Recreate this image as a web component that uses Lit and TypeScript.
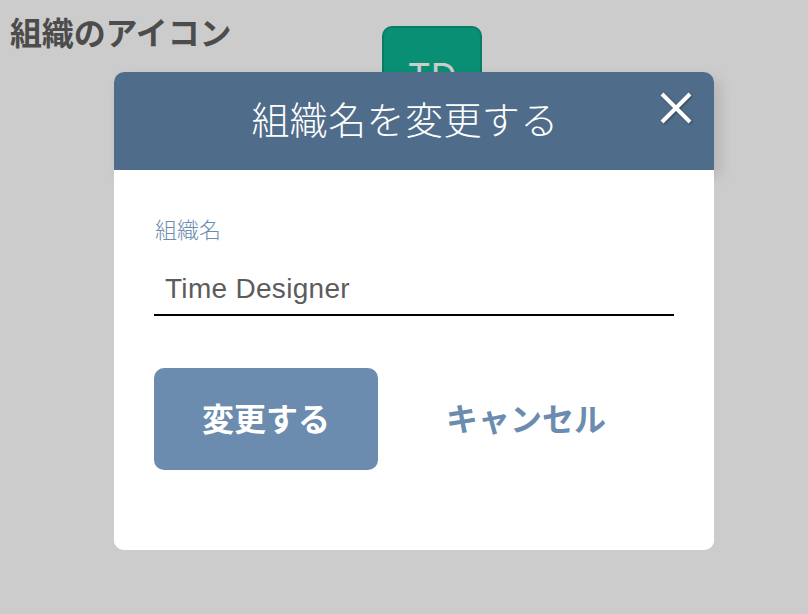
import { LitElement, html, css } from 'lit';
import { customElement, state } from 'lit/decorators.js';

@customElement('app-root')
export class AppRoot extends LitElement {
  static styles = css`
    :host {
      display: block;
      position: relative;
      width: 808px;
      height: 614px;
      overflow: hidden;
      background: #fff;
      font-family: "Noto Sans CJK JP", "Noto Sans", sans-serif;
    }
    .page {
      display: flex;
      align-items: flex-start;
      padding: 26px 0 0 10px;
    }
    .page h2 {
      margin: -13px 0 0;
      width: 372px;
      font-size: 32px;
      line-height: 36px;
      font-weight: 700;
      letter-spacing: -0.15px;
      color: #5f5f5f;
      white-space: nowrap;
    }
    .tile {
      box-sizing: border-box;
      width: 100px;
      height: 100px;
      border-radius: 10px;
      border: 2px solid #0b9c7d;
      background: #0cb592;
      color: #fff;
      font-family: Inter, sans-serif;
      font-size: 36px;
      display: flex;
      justify-content: center;
      align-items: center;
    }
    .backdrop {
      position: absolute;
      inset: 0;
      background: rgba(0, 0, 0, 0.2);
    }
    .modal {
      position: absolute;
      left: 114px;
      top: 72px;
      width: 600px;
      height: 478px;
      background: #fff;
      border-radius: 10px;
    }
    .head {
      position: relative;
      height: 98px;
      background: #4f6d8a;
      border-radius: 10px 10px 0 0;
      box-shadow: 6px 6px 14px rgba(0, 0, 0, 0.12);
      display: flex;
      justify-content: center;
      align-items: center;
      padding-right: 18px;
      box-sizing: border-box;
    }
    .head h1 {
      margin: -8px 0 0;
      font-size: 38px;
      font-weight: 300;
      letter-spacing: 0.4px;
      color: #fff;
    }
    .close {
      position: absolute;
      right: 22px;
      top: 20px;
      width: 32px;
      height: 32px;
      padding: 0;
      border: none;
      background: none;
      filter: drop-shadow(1px 1px 1px rgba(0, 0, 0, 0.35));
    }
    .close svg {
      display: block;
    }
    .body {
      position: relative;
      background: #fff;
      border-radius: 0 0 10px 10px;
      height: 380px;
      box-sizing: border-box;
      padding: 42px 40px 0;
    }
    label {
      display: block;
      font-size: 22px;
      font-weight: 300;
      line-height: 32px;
      color: #6b8cae;
      padding-left: 1px;
    }
    input {
      display: block;
      box-sizing: border-box;
      width: 100%;
      height: 52px;
      padding: 0 11px;
      margin-top: 20px;
      border: none;
      border-bottom: 2px solid #000;
      outline: none;
      background: none;
      font-family: "Liberation Sans", sans-serif;
      font-size: 28px;
      letter-spacing: 0.3px;
      color: #5c5c5c;
    }
    .actions {
      display: flex;
      margin-top: 52px;
    }
    .actions button {
      width: 224px;
      height: 102px;
      border: none;
      border-radius: 10px;
      font-family: inherit;
      font-size: 32px;
      font-weight: 700;
      padding: 0 0 4px;
    }
    .save {
      background: #6b8cae;
      color: #fff;
    }
    .cancel {
      margin-left: 36px;
      background: none;
      color: #6b8cae;
    }
  `;

  @state() orgName = 'Time Designer';

  render() {
    return html`
      <div class="page">
        <h2>組織のアイコン</h2>
        <div class="tile">TD</div>
      </div>
      <div class="backdrop"></div>
      <div class="modal">
        <div class="head">
          <h1>組織名を変更する</h1>
          <button class="close" aria-label="閉じる">
            <svg width="32" height="32" viewBox="0 0 32 32" fill="none" stroke="#fff" stroke-width="4">
              <path d="M2 2 L30 30 M30 2 L2 30" />
            </svg>
          </button>
        </div>
        <div class="body">
          <label for="org">組織名</label>
          <input id="org" type="text" .value=${this.orgName} />
          <div class="actions">
            <button class="save">変更する</button>
            <button class="cancel">キャンセル</button>
          </div>
        </div>
      </div>
    `;
  }
}
